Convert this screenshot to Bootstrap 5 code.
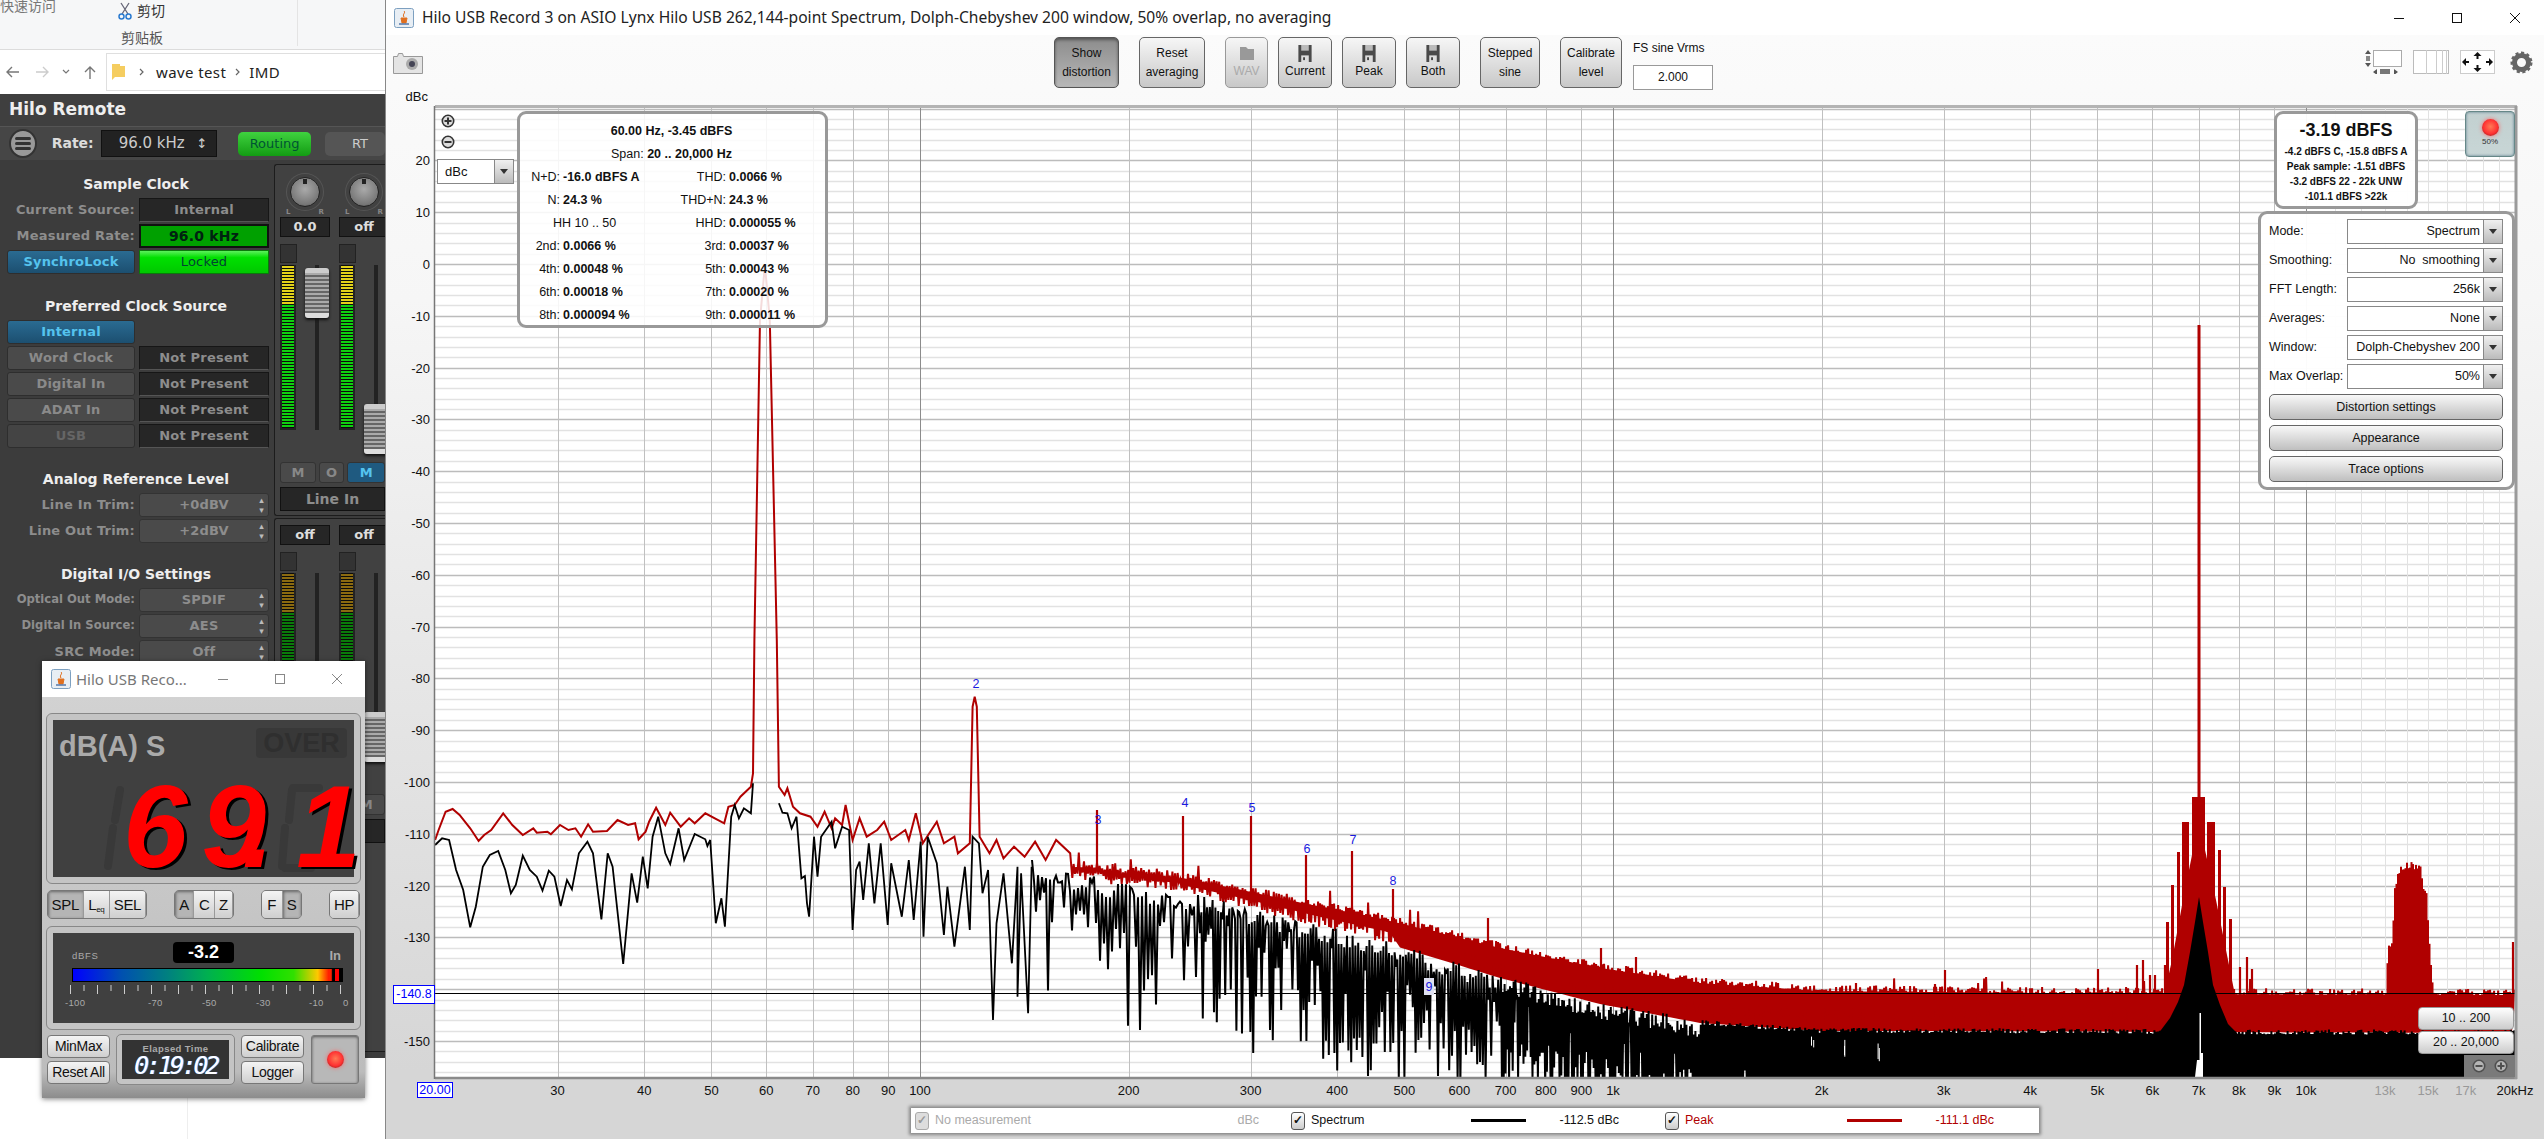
<!DOCTYPE html>
<html lang="en">
<head>
<meta charset="UTF-8">
<title>Hilo USB Record 3</title>
<link href="https://cdn.jsdelivr.net/npm/bootstrap@5.3.0/dist/css/bootstrap.min.css" rel="stylesheet">
<style>
html, body { margin: 0; background: #fff; }
.desk { position: relative; width: 2544px; height: 1139px; overflow: hidden; font-family: "Liberation Sans", Arial, sans-serif; font-size: 12px; color: #111; }

/* explorer behind everything */
.xp { position: absolute; left: 0; top: 0; width: 385px; height: 1139px; background: #fff; font-family: "Noto Sans", "Noto Sans CJK SC", sans-serif; }
.xp-ribbon { height: 50px; background: #f6f7f8; border-bottom: 1px solid #dcdcdc; position: relative; color: #555; font-family: "Noto Sans CJK SC", sans-serif; font-size: 14px; }
.xp-quick { position: absolute; left: 0; top: -5px; color: #777; }
.xp-cut { position: absolute; left: 118px; top: 0; color: #333; gap: 5px; }
.xp-board { position: absolute; left: 121px; top: 27px; color: #555; }
.xp-sep { position: absolute; left: 297px; top: 0; height: 46px; border-left: 1px solid #e4e4e4; }
.xp-addr { height: 44px; padding-left: 6px; color: #222; font-size: 15px; letter-spacing: .4px; }
.xp-path { margin-left: 6px; height: 38px; flex: 1; border: 1px solid #dfdfdf; border-right: 0; padding-left: 5px; }
.xp-ch1 { margin: 0 11px 0 14px; }
.xp-ch2 { margin: 0 8px 0 9px; }
.xp-rule { position: absolute; left: 187px; top: 1060px; height: 79px; border-left: 1px solid #eee; }

/* hilo remote */
.rm { position: absolute; left: 0; top: 94px; width: 385px; height: 964px; background: #3c3c3c; font-family: "DejaVu Sans", sans-serif; font-weight: 700; overflow: hidden; }
.rm-title { height: 32px; padding-left: 9px; color: #eee; font-size: 17px; background: #3f3f3f; }
.rm-bar { height: 34px; background: #464646; border-top: 1px solid #555; padding-left: 9px; }
.rm-menu { width: 29px; height: 29px; border-radius: 50%; background: #999; border: 2px solid #333; padding: 6px 4px; gap: 2px; }
.rm-menu i { display: block; height: 3px; background: #333; border-radius: 2px; }
.rm-rate { color: #ddd; font-size: 14px; margin-left: 15px; }
.rm-drop { width: 124px; height: 27px; margin-left: 7px; background: #222; border: 1px solid #111; color: #ccc; font-weight: 400; font-size: 15px; padding: 0 9px 0 17px; }
.rm-routing { width: 79px; height: 24px; margin-left: 21px; border-radius: 5px; background: linear-gradient(#3fd23f, #139c13); font-weight: 400; font-size: 13px; color: #053; }
.rm-rt { width: 60px; height: 24px; margin-left: 14px; border-radius: 5px; background: #555; color: #ccc; font-weight: 400; font-size: 13px; padding-left: 27px; flex: none; }
.rm-main { height: 898px; }
.rm-left { width: 274px; padding-top: 11px; flex: none; }
.rm-head { height: 26px; color: #eee; font-size: 14px; text-align: center; line-height: 26px; padding-right: 2px; }
.rm-row { height: 26px; padding-left: 7px; gap: 4px; align-items: center; font-size: 13px; letter-spacing: .2px; }
.rm-lbl { width: 128px; text-align: right; color: #8d8d8d; white-space: nowrap; }
.rm-lbl.tight { font-size: 11.6px; letter-spacing: 0; }
.rm-btn { width: 128px; height: 24px; border-radius: 3px; background: #4a4a4a; border: 1px solid #2e2e2e; color: #8a8a8a; text-align: center; line-height: 22px; }
.rm-btn.on { background: linear-gradient(#2a6b92, #1c4f70); color: #55c3ee; }
.rm-btn.dim { color: #666; background: #444; }
.rm-val { width: 130px; height: 24px; background: #262626; border: 1px solid #161616; border-bottom-color: #555; color: #8d8d8d; text-align: center; line-height: 22px; }
.rm-val.grn { background: #00a000; border: 2px solid #111; color: #021; line-height: 20px; font-size: 14px; }
.rm-val.lock { background: linear-gradient(#5cf05c, #00e000 30%, #00c800); border: 1px solid #0a7a0a; color: #043; font-weight: 400; }
.rm-sel { width: 130px; height: 24px; border-radius: 3px; background: #4a4a4a; border: 1px solid #333; color: #8d8d8d; position: relative; text-align: center; line-height: 22px; }
.rm-sel::after { content: "\25B4\A\25BE"; white-space: pre; position: absolute; right: 4px; top: 1px; font-size: 9px; line-height: 10px; color: #bbb; }
.rm-gap18 { margin-top: 18px; }
.rm-gap17 { margin-top: 17px; }
.mx { width: 111px; flex: none; background: #3c3c3c; }
.mx-strip { height: 352px; border: 1px solid #1c1c1c; border-right: 0; border-radius: 3px 0 0 3px; margin-top: 4px; padding: 6px 0 0 5px; background: #414141; overflow: hidden; }
.mx-strip2 { height: 534px; margin-top: 2px; }
.mx-cols { gap: 9px; }
.mx-col { width: 50px; flex: none; position: relative; }
.mx-knob { width: 30px; height: 30px; border-radius: 50%; margin: 6px auto 0; background: radial-gradient(circle at 50% 40%, #aaa, #777 70%, #222 100%); border: 1px solid #222; position: relative; box-shadow: 0 0 0 3px #414141, 0 0 0 4px #555; }
.mx-knob::after { content: ""; position: absolute; left: 12px; top: 1px; width: 4px; height: 5px; background: #222; }
.mx-lr { font-size: 7px; color: #888; height: 10px; padding: 0 6px; }
.mx-num { height: 20px; width: 50px; background: #262626; border: 1px solid #111; color: #ddd; font-size: 13px; text-align: center; line-height: 18px; margin: 0 0 7px; }
.mx-chan { height: 185px; position: relative; }
.mx-clip { width: 17px; height: 19px; background: #333; border: 1px solid #222; margin-bottom: 2px; }
.mx-vu { width: 16px; height: 165px; background: repeating-linear-gradient(#0b0b0b 0 1px, #0fcf0f 1px 3px); border: 2px solid #222; border-top: 0; position: relative; }
.mx-vu::before { content: ""; position: absolute; left: 0; right: 0; top: 0; height: 40px; background: repeating-linear-gradient(#0b0b0b 0 1px, #e2d21a 1px 3px); }
.mx-vu.off { background: repeating-linear-gradient(#0b0b0b 0 1px, #0a7a0a 1px 3px); }
.mx-vu.off::before { background: repeating-linear-gradient(#0b0b0b 0 1px, #8a6a10 1px 3px); }
.mx-track { position: absolute; left: 35px; top: 21px; width: 4px; height: 165px; background: #222; }
.mx-thumb { position: absolute; left: 25px; width: 24px; height: 50px; border-radius: 3px; background: repeating-linear-gradient(#aaa 0 2px, #666 2px 4px); box-shadow: 0 2px 3px #111; border-top: 5px solid #ccc; border-bottom: 5px solid #ddd; }
.mx-thumb.low { top: 160px; }
.mx-thumb.high { top: 24px; }
.mx-btns { gap: 3px; margin-top: 33px; color: #888; font-size: 13px; text-align: center; line-height: 19px; }
.mx-btns div { height: 21px; border-radius: 3px; background: #4a4a4a; border: 1px solid #333; }
.mx-m1 { width: 38px; }
.mx-m2 { width: 27px; }
.mx-m3 { width: 40px; }
.mx-m3.on { background: #1f5a80; color: #55c3ee; }
.mx-strip2 .mx-btns { margin-top: 57px; }
.mx-name { height: 24px; margin-top: 4px; background: #262626; border: 1px solid #111; color: #8d8d8d; font-size: 14px; text-align: center; line-height: 22px; }

/* main window */
.mw { position: absolute; left: 385px; top: 0; width: 2159px; height: 1139px; background: linear-gradient(#fbfbfb 35px, #f6f6f6 300px, #d6d6d6 1070px); border-left: 1px solid #888; }
.mw-title { height: 35px; background: #fff; padding-left: 8px; font-family: "Noto Sans", sans-serif; font-size: 15.6px; color: #222; position: relative; }
.mw-ctrl { position: absolute; top: 0; right: 0; gap: 0; }
.mw-ctrl span { width: 58px; height: 35px; display: flex; align-items: center; justify-content: center; }
.tbar { height: 55px; padding: 2px 11px 0 7px; }
.btn.tb { width: 65px; height: 51px; margin-left: 10px; padding: 0; border: 1px solid #666; border-radius: 5px; background: linear-gradient(#f6f6f6, #c8c8c8); color: #111; font-size: 12px; line-height: 19px; display: flex; flex-direction: column; align-items: center; justify-content: center; --bs-btn-font-size: 12px; }
.btn.tb.down { background: linear-gradient(#8c8c8c, #b8b8b8); box-shadow: inset 0 2px 3px #555; border-color: #555; }
.btn.tb.dis { color: #aaa; border-color: #999; }
.tb-first { margin-left: 631px !important; }
.tb-20 { margin-left: 20px !important; }
.w66 { width: 66px !important; }
.w43 { width: 43px !important; }
.w54 { width: 54px !important; }
.w60 { width: 60px !important; }
.w62 { width: 62px !important; }
.fs-box { margin-left: 11px; width: 80px; height: 51px; font-size: 12px; padding-top: 2px; }
.fs-inp { height: 25px; border: 1px solid #999; background: #fff; text-align: center; line-height: 23px; margin-top: 8px; }
.tb-icons { margin-left: auto; gap: 11px; padding-top: 13px; }
.chart { position: relative; height: 1016px; }
.chart svg.plot { display: block; }
.plot text { font-family: "Liberation Sans", Arial, sans-serif; font-size: 13px; fill: #111; }

/* overlays sit on top of the plot; coordinates are plot-relative */
.ov { position: absolute; background: rgba(255,255,255,.86); border: 3px solid #999; border-radius: 9px; }
.ov-info { left: 131px; top: 21px; width: 311px; height: 217px; padding-top: 6px; font-size: 12.5px; }
.ov-row { height: 23px; line-height: 23px; white-space: nowrap; }
.ov-k1 { width: 32px; text-align: right; flex: none; margin-right: 3px; }
.ov-hh { width: 148px; flex: none; padding-left: 25px; }
.ov-v1 { width: 113px; flex: none; font-weight: 700; }
.ov-k2 { width: 50px; text-align: right; flex: none; margin-right: 3px; }
.ov-v2 { font-weight: 700; }
.ov-c { text-align: center; padding-right: 2px; }
.ov-level { left: 1888px; top: 21px; width: 144px; height: 98px; text-align: center; font-weight: 700; font-size: 10px; line-height: 15px; padding-top: 3px; background: rgba(255,255,255,.95); }
.ov-big { font-size: 18px; line-height: 27px; }
.ov-rec { position: absolute; left: 2079px; top: 21px; width: 50px; height: 46px; border-radius: 4px; border: 1px solid #688; background: linear-gradient(#c2d0d0, #c8d6d6); font-size: 8px; color: #333; box-shadow: inset 0 0 3px #578; padding-top: 7px; text-align: center; }
.led { width: 17px; height: 17px; border-radius: 50%; background: radial-gradient(circle at 50% 45%, #ff7a55, #f33 55%, #b22 80%); box-shadow: 0 0 4px #f66; margin: 0 auto; }
.ov-ctl { left: 1872px; top: 121px; width: 257px; height: 279px; background: rgba(255,255,255,.97); padding: 5px 8px 0 8px; }
.ctl-row { height: 25px; margin-bottom: 4px; }
.ctl-lbl { width: 78px; flex: none; white-space: nowrap; font-size: 12.5px; }
.ctl-sel { width: 156px; flex: none; height: 25px; border: 1px solid #888; background: #fff; text-align: right; line-height: 23px; padding-right: 22px; position: relative; font-size: 12.5px; white-space: nowrap; }
.ctl-sel i, .dbc-sel i { position: absolute; right: 0; top: 0; bottom: 0; width: 19px; background: linear-gradient(#f0f0f0, #bbb); border-left: 1px solid #888; }
.ctl-sel i::after, .dbc-sel i::after { content: ""; position: absolute; left: 5px; top: 9px; border: 4px solid transparent; border-top: 5px solid #333; }
.btn.ctl-btn { display: block; width: 234px; height: 26px; margin: 5px 0 0 0; padding: 0; border: 1px solid #666; border-radius: 5px; background: linear-gradient(#f8f8f8, #bfbfbf); color: #111; font-size: 12.5px; --bs-btn-font-size: 12.5px; }
.dbc-sel { position: absolute; left: 51px; top: 69px; width: 77px; height: 25px; background: #fff; border: 1px solid #888; font-size: 13px; line-height: 23px; padding-left: 7px; }
.zoom-dots { position: absolute; left: 55px; top: 24px; gap: 7px; }
.btn.range { position: absolute; left: 2032px; width: 96px; height: 23px; padding: 0; border: 1px solid #999; border-radius: 4px; background: linear-gradient(#fff, #ccc); color: #111; font-size: 12.5px; --bs-btn-font-size: 12.5px; }
.rg1 { top: 917px; }
.rg2 { top: 941px; }
.rg-zoom { position: absolute; left: 2078px; top: 965px; width: 51px; height: 22px; background: #7a7a7a; gap: 8px; }
.tag { position: absolute; background: #fff; border: 1px solid #00f; color: #00f; font-size: 12.5px; text-align: center; }
.tag-y { left: 7px; top: 895px; width: 42px; height: 19px; line-height: 17px; }
.tag-x { left: 31px; top: 992px; width: 36px; height: 16px; line-height: 14px; }

.lg { margin: 2px 0 0 525px; width: 1128px; height: 25px; background: #fff; box-shadow: 0 0 3px 2px #888; font-size: 12.5px; }
.lg-chk { width: 14px; height: 18px; margin: 0 6px 0 4px; border: 1px solid #555; border-radius: 3px; background: linear-gradient(#fff, #ccc); color: #111; font-size: 12px; font-weight: 700; line-height: 15px; text-align: center; flex: none; }
.lg-chk.dis { border-color: #aaa; color: #999; background: #ddd; }
.lg-dash { width: 55px; height: 3px; flex: none; }
.lg-a { width: 376px; }
.lg-b { width: 374px; }
.lg-sp { margin-left: 106px; }
.lg-pk { margin-left: 133px; background: #b00000; }
.lg-v { margin-left: 34px; }
.c-grey { color: #aaa; }
.c-red { color: #b00000; }

/* hilo record level meter window */
.rc { position: absolute; left: 42px; top: 661px; width: 323px; height: 437px; box-shadow: 0 1px 5px rgba(0,0,0,.5); background: linear-gradient(#d4d4d4, #bcbcbc 94%, #8c8c8c); }
.rc-title { height: 36px; background: #fff; padding-left: 9px; font-family: "Noto Sans", sans-serif; font-size: 15px; color: #777; position: relative; gap: 5px; }
.rc-ctl { position: absolute; right: 0; top: 0; }
.rc-ctl span { width: 57px; height: 36px; display: flex; align-items: center; justify-content: center; }
.rc-body { padding: 17px 5px 0 5px; }
.rc-frame { border: 6px solid #c4c4c4; outline: 1px solid #888; border-radius: 5px; background: #404040; position: relative; }
.rc-lcd { height: 169px; }
.rc-mode { position: absolute; left: 6px; top: 8px; font-weight: 700; font-size: 29px; color: #aaa; line-height: 36px; }
.rc-over { position: absolute; left: 203px; top: 8px; width: 91px; height: 30px; background: #383838; border-radius: 4px; color: #2f2f2f; font-weight: 700; font-size: 27px; line-height: 30px; text-align: center; }
.rc-num { position: absolute; left: 70px; top: 49px; color: #f00; font-style: italic; font-weight: 700; font-size: 116px; line-height: 116px; text-shadow: 3px 2px 0 #000; white-space: nowrap; letter-spacing: 14px; }
.rc-dot { margin-left: -38px; letter-spacing: 22px; }
.rc-ghost { position: absolute; left: 0; top: 0; }
.rc-keys { margin-top: 7px; height: 29px; }
.rc-grp { display: flex; border: 1px solid #777; border-radius: 5px; overflow: hidden; height: 29px; background: #999; }
.rc-key { height: 100%; border-right: 1px solid #999; background: linear-gradient(#f4f4f4, #cfcfcf); color: #111; font-size: 15px; line-height: 27px; text-align: center; letter-spacing: -.3px; }
.rc-key.down { background: #b5b5b5; box-shadow: inset 1px 1px 3px #666; }
.rc-key sub { font-size: 8px; bottom: -.2em; }
.k36 { width: 36px; }
.k27 { width: 27px; }
.k21 { width: 21px; }
.k20 { width: 20px; }
.k19 { width: 19px; }
.k18 { width: 18px; }
.k29 { width: 29px; }
.rc-gap { margin-left: 27px; }
.rc-meter { height: 102px; margin-top: 8px; }
.rc-dbfs { position: absolute; left: 19px; top: 16px; color: #aaa; font-size: 9.5px; letter-spacing: .7px; }
.rc-peak { position: absolute; left: 120px; top: 9px; width: 61px; height: 21px; background: #000; border-radius: 4px; color: #fff; font-weight: 700; font-size: 18px; line-height: 21px; text-align: center; }
.rc-in { position: absolute; right: 13px; top: 13px; color: #aaa; font-weight: 700; font-size: 13px; }
.rc-bar { position: absolute; left: 19px; top: 35px; width: 271px; height: 14px; border: 1px solid #000; background: linear-gradient(90deg, #00f 0, #0050b0 18%, #008080 35%, #00b050 50%, #00e000 70%, #30e000 82%, #ffc800 91%, #ff2000 95%, #ff2000 96%, #000 96.5%, #000 97.5%, #f00 97.5%, #f00 99%, #000 99%); }
.rc-scale { position: absolute; left: 12px; top: 52px; }
.rc-scale text { font-family: "Liberation Sans", sans-serif; font-size: 9.5px; fill: #aaa; letter-spacing: .3px; }
.rc-foot { margin-top: 6px; height: 49px; }
.rc-small { width: 63px; flex: none; gap: 3px; }
.rc-small2 { width: 63px; flex: none; gap: 3px; margin-left: 7px; }
.rc-sbtn { height: 23px; border: 1px solid #777; border-radius: 4px; background: linear-gradient(#f4f4f4, #cfcfcf); font-size: 14px; line-height: 21px; text-align: center; color: #111; letter-spacing: -.3px; }
.rc-time { width: 117px; flex: none; margin-left: 7px; border: 5px solid #c4c4c4; outline: 1px solid #888; border-radius: 4px; background: #333; color: #aaa; text-align: center; font-size: 9.5px; line-height: 11px; padding-top: 3px; font-weight: 700; letter-spacing: .4px; }
.rc-clock { font-family: "DejaVu Sans Mono", monospace; font-style: italic; font-size: 25px; line-height: 24px; color: #fff; letter-spacing: -3.2px; font-weight: 400; text-shadow: 1px 0 0 #49f; }
.rc-rec { width: 48px; flex: none; margin-left: 7px; border: 1px solid #777; border-radius: 3px; background: #b8b8b8; box-shadow: inset 0 1px 3px #555; }
</style>
</head>
<body>
<svg width="0" height="0" class="position-absolute">
  <symbol id="java" viewBox="0 0 20 20">
    <rect x=".5" y=".5" width="19" height="19" rx="2" fill="#e8eef4" stroke="#7da0c0"/>
    <path d="M10 3c2 2-2 3 0 6M7 10h6l-1 5H8z" fill="#e07020" stroke="#e07020"/>
    <path d="M5 16h10" stroke="#5577aa" stroke-width="1.5"/>
  </symbol>
  <symbol id="floppy" viewBox="0 0 14 18">
    <path d="M0 0h14v18H0z" fill="#4a4a4a"/>
    <rect x="3" y="0" width="8" height="6" fill="#bbb"/>
    <rect x="3" y="11" width="8" height="7" fill="#ddd"/>
    <rect x="5" y="13" width="2" height="3" fill="#444"/>
  </symbol>
  <symbol id="plus" viewBox="0 0 14 14">
    <circle cx="7" cy="7" r="5.7" fill="#ddd" stroke="#333" stroke-width="1.6"/>
    <path d="M3.5 7h7M7 3.5v7" stroke="#333" stroke-width="2"/>
  </symbol>
  <symbol id="minus" viewBox="0 0 14 14">
    <circle cx="7" cy="7" r="5.7" fill="#ddd" stroke="#333" stroke-width="1.6"/>
    <path d="M3.5 7h7" stroke="#333" stroke-width="2"/>
  </symbol>
</svg>

<div class="desk">

  <div class="xp">
    <div class="xp-ribbon">
      <span class="xp-quick">快速访问</span>
      <div class="xp-cut d-flex align-items-center">
        <svg width="14" height="18" viewBox="0 0 14 18"><path d="M3 1l7 11M11 1L4 12" stroke="#667" stroke-width="1.3" fill="none"/><circle cx="3.5" cy="14.5" r="2.5" fill="none" stroke="#2a7ad0" stroke-width="1.5"/><circle cx="10.5" cy="14.5" r="2.5" fill="none" stroke="#2a7ad0" stroke-width="1.5"/></svg>
        <span>剪切</span>
      </div>
      <span class="xp-board">剪贴板</span>
      <span class="xp-sep"></span>
    </div>
    <div class="xp-addr d-flex align-items-center">
      <svg width="94" height="18" viewBox="0 0 94 18"><path d="M13 9H1m5-5L1 9l5 5" stroke="#777" stroke-width="1.4" fill="none"/><path d="M30 9h12m-5-5l5 5-5 5" stroke="#ccc" stroke-width="1.4" fill="none"/><path d="M57 7l3 3 3-3" stroke="#777" stroke-width="1.2" fill="none"/><path d="M84 16V4m-5 5l5-5 5 5" stroke="#777" stroke-width="1.4" fill="none"/></svg>
      <div class="xp-path d-flex align-items-center">
        <svg width="13" height="16" viewBox="0 0 13 16"><path d="M0 0h8v2h5v11H3l-3 3z" fill="#f5cd60"/></svg>
        <svg class="xp-ch1" width="6" height="8" viewBox="0 0 6 8"><path d="M1 1l3 3-3 3" stroke="#666" stroke-width="1.2" fill="none"/></svg>
        <span>wave test</span>
        <svg class="xp-ch2" width="6" height="8" viewBox="0 0 6 8"><path d="M1 1l3 3-3 3" stroke="#666" stroke-width="1.2" fill="none"/></svg>
        <span>IMD</span>
      </div>
    </div>
    <span class="xp-rule"></span>
  </div>

  <div class="rm">
    <div class="rm-title d-flex align-items-center">Hilo Remote</div>
    <div class="rm-bar d-flex align-items-center">
      <div class="rm-menu d-flex flex-column"><i></i><i></i><i></i></div>
      <span class="rm-rate">Rate:</span>
      <div class="rm-drop d-flex align-items-center justify-content-between"><span>96.0 kHz</span><span class="small">&#8597;</span></div>
      <div class="rm-routing d-flex align-items-center justify-content-center">Routing</div>
      <div class="rm-rt d-flex align-items-center">RT</div>
    </div>
    <div class="rm-main d-flex">
      <div class="rm-left">
        <div class="rm-head">Sample Clock</div>
        <div class="rm-row d-flex"><div class="rm-lbl">Current Source:</div><div class="rm-val">Internal</div></div>
        <div class="rm-row d-flex"><div class="rm-lbl">Measured Rate:</div><div class="rm-val grn">96.0 kHz</div></div>
        <div class="rm-row d-flex"><div class="rm-btn on">SynchroLock</div><div class="rm-val lock">Locked</div></div>

        <div class="rm-head rm-gap18">Preferred Clock Source</div>
        <div class="rm-row d-flex"><div class="rm-btn on">Internal</div></div>
        <div class="rm-row d-flex"><div class="rm-btn">Word Clock</div><div class="rm-val">Not Present</div></div>
        <div class="rm-row d-flex"><div class="rm-btn">Digital In</div><div class="rm-val">Not Present</div></div>
        <div class="rm-row d-flex"><div class="rm-btn">ADAT In</div><div class="rm-val">Not Present</div></div>
        <div class="rm-row d-flex"><div class="rm-btn dim">USB</div><div class="rm-val">Not Present</div></div>

        <div class="rm-head rm-gap17">Analog Reference Level</div>
        <div class="rm-row d-flex"><div class="rm-lbl">Line In Trim:</div><div class="rm-sel">+0dBV</div></div>
        <div class="rm-row d-flex"><div class="rm-lbl">Line Out Trim:</div><div class="rm-sel">+2dBV</div></div>

        <div class="rm-head rm-gap17">Digital I/O Settings</div>
        <div class="rm-row d-flex"><div class="rm-lbl tight">Optical Out Mode:</div><div class="rm-sel">SPDIF</div></div>
        <div class="rm-row d-flex"><div class="rm-lbl tight">Digital In Source:</div><div class="rm-sel">AES</div></div>
        <div class="rm-row d-flex"><div class="rm-lbl">SRC Mode:</div><div class="rm-sel">Off</div></div>
      </div>
      <div class="mx">
        <div class="mx-strip">
          <div class="mx-cols d-flex">
            <div class="mx-col">
              <div class="mx-knob"></div>
              <div class="mx-lr d-flex justify-content-between"><span>L</span><span>R</span></div>
              <div class="mx-num">0.0</div>
              <div class="mx-chan"><div class="mx-clip"></div><div class="mx-vu"></div><div class="mx-track"></div><div class="mx-thumb high"></div></div>
            </div>
            <div class="mx-col">
              <div class="mx-knob"></div>
              <div class="mx-lr d-flex justify-content-between"><span>L</span><span>R</span></div>
              <div class="mx-num">off</div>
              <div class="mx-chan"><div class="mx-clip"></div><div class="mx-vu"></div><div class="mx-track"></div><div class="mx-thumb low"></div></div>
            </div>
          </div>
          <div class="mx-btns d-flex"><div class="mx-m1">M</div><div class="mx-m2">O</div><div class="mx-m3 on">M</div></div>
          <div class="mx-name">Line In</div>
        </div>
        <div class="mx-strip mx-strip2">
          <div class="mx-cols d-flex">
            <div class="mx-col">
              <div class="mx-num">off</div>
              <div class="mx-chan"><div class="mx-clip"></div><div class="mx-vu off"></div><div class="mx-track"></div></div>
            </div>
            <div class="mx-col">
              <div class="mx-num">off</div>
              <div class="mx-chan"><div class="mx-clip"></div><div class="mx-vu off"></div><div class="mx-track"></div><div class="mx-thumb low"></div></div>
            </div>
          </div>
          <div class="mx-btns d-flex"><div class="mx-m1">M</div><div class="mx-m2">O</div><div class="mx-m3">M</div></div>
          <div class="mx-name"></div>
        </div>
      </div>
    </div>
  </div>

  <div class="mw d-flex flex-column">
    <div class="mw-title d-flex align-items-center">
      <svg class="me-2" width="20" height="20"><use href="#java"/></svg>
      <span>Hilo USB Record 3 on ASIO Lynx Hilo USB 262,144-point Spectrum, Dolph-Chebyshev 200 window, 50% overlap, no averaging</span>
      <div class="mw-ctrl d-flex">
        <span><svg width="12" height="12"><path d="M1 6.5h10" stroke="#111"/></svg></span>
        <span><svg width="12" height="12"><rect x="1.5" y="1.5" width="9" height="9" fill="none" stroke="#111"/></svg></span>
        <span><svg width="12" height="12"><path d="M1 1l10 10M11 1L1 11" stroke="#111"/></svg></span>
      </div>
    </div>

    <div class="tbar d-flex align-items-start">
      <svg class="mt-3" width="30" height="21" viewBox="0 0 30 21"><path d="M.5 3.5h4l1-3h4l1 3h19v17H.5z" fill="#e4e4e4" stroke="#999"/><circle cx="19" cy="11" r="6" fill="#aaa"/><circle cx="19" cy="11" r="3" fill="#445"/></svg>
      <button class="btn tb down tb-first"><span>Show</span><span>distortion</span></button>
      <button class="btn tb tb-20 w66"><span>Reset</span><span>averaging</span></button>
      <button class="btn tb dis tb-20 w43"><svg width="14" height="17" viewBox="0 0 14 17"><path d="M0 2h6l2 2h6v11H0z" fill="#999"/></svg><span>WAV</span></button>
      <button class="btn tb w54"><svg width="14" height="17"><use href="#floppy"/></svg><span>Current</span></button>
      <button class="btn tb w54"><svg width="14" height="17"><use href="#floppy"/></svg><span>Peak</span></button>
      <button class="btn tb w54"><svg width="14" height="17"><use href="#floppy"/></svg><span>Both</span></button>
      <button class="btn tb tb-20 w60"><span>Stepped</span><span>sine</span></button>
      <button class="btn tb tb-20 w62"><span>Calibrate</span><span>level</span></button>
      <div class="fs-box">
        <div>FS sine Vrms</div>
        <div class="fs-inp">2.000</div>
      </div>
      <div class="tb-icons d-flex align-items-center">
        <svg width="37" height="24" viewBox="0 0 37 24"><rect x="8.500" y=".5" width="28" height="16" fill="#fff" stroke="#aaa"/><path d="M3 0l3 4H0zM3 17l3-4H0zM8 22l4-3v6zM33 22l-4-3v6z" fill="#555"/><rect x="1" y="6" width="4" height="5" fill="#888"/><rect x="15" y="19" width="10" height="5" fill="#777"/></svg>
        <svg width="36" height="24" viewBox="0 0 36 24"><rect x=".5" y=".5" width="35" height="23" fill="#fff" stroke="#bbb"/><path d="M13.500 0v24M23.500 0v24M29.500 0v24M33.500 0v24" stroke="#ccc"/></svg>
        <svg width="35" height="24" viewBox="0 0 35 24"><rect x=".5" y=".5" width="34" height="23" fill="#fff" stroke="#ccc"/><path d="M17.500 2l4 4h-3v3h-2V6h-3zM17.500 22l4-4h-3v-3h-2v3h-3zM2 12l4-4v3h3v2H6v3zM33 12l-4-4v3h-3v2h3v3z" fill="#111"/></svg>
        <svg class="ms-1" width="23" height="23" viewBox="0 0 23 23"><circle cx="11.500" cy="11.500" r="7" fill="none" stroke="#666" stroke-width="5"/><circle cx="11.500" cy="11.500" r="9.500" fill="none" stroke="#666" stroke-width="3" stroke-dasharray="3 2.500"/></svg>
      </div>
    </div>

    <div class="chart">
      <svg class="plot" id="plot" width="2158" height="1016" viewBox="386 90 2158 1016"></svg>

      <div class="zoom-dots d-flex flex-column">
        <svg width="14" height="14"><use href="#plus"/></svg>
        <svg width="14" height="14"><use href="#minus"/></svg>
      </div>
      <div class="dbc-sel">dBc<i></i></div>

      <div class="ov ov-info">
        <div class="ov-row ov-c fw-bold">60.00 Hz, -3.45 dBFS</div>
        <div class="ov-row ov-c">Span: <b>20 .. 20,000 Hz</b></div>
        <div id="infoRows"></div>
      </div>

      <div class="ov ov-level">
        <div class="ov-big">-3.19 dBFS</div>
        <div>-4.2 dBFS C, -15.8 dBFS A</div>
        <div>Peak sample: -1.51 dBFS</div>
        <div>-3.2 dBFS 22 - 22k UNW</div>
        <div>-101.1 dBFS &gt;22k</div>
      </div>
      <div class="ov-rec"><div class="led"></div>50%</div>

      <div class="ov ov-ctl">
        <div id="ctlRows"></div>
        <button class="btn ctl-btn">Distortion settings</button>
        <button class="btn ctl-btn">Appearance</button>
        <button class="btn ctl-btn">Trace options</button>
      </div>

      <button class="btn range rg1">10 .. 200</button>
      <button class="btn range rg2">20 .. 20,000</button>
      <div class="rg-zoom d-flex align-items-center justify-content-center">
        <svg width="14" height="14" opacity=".6"><use href="#minus"/></svg>
        <svg width="14" height="14" opacity=".6"><use href="#plus"/></svg>
      </div>
      <div class="tag tag-y">-140.8</div>
      <div class="tag tag-x">20.00</div>
    </div>

    <div class="lg d-flex align-items-center">
      <div class="lg-a d-flex align-items-center c-grey"><span class="lg-chk dis">&#10003;</span>No measurement<span class="ms-auto pe-4 me-1">dBc</span></div>
      <div class="lg-b d-flex align-items-center"><span class="lg-chk">&#10003;</span>Spectrum<span class="lg-dash lg-sp bg-black"></span><span class="lg-v">-112.5 dBc</span></div>
      <div class="d-flex align-items-center c-red"><span class="lg-chk">&#10003;</span>Peak<span class="lg-dash lg-pk"></span><span class="lg-v">-111.1 dBc</span></div>
    </div>
  </div>

  <div class="rc">
    <div class="rc-title d-flex align-items-center">
      <svg width="20" height="20"><use href="#java"/></svg>
      <span>Hilo USB Reco...</span>
      <div class="rc-ctl d-flex">
        <span><svg width="12" height="12"><path d="M1 6.500h10" stroke="#888"/></svg></span>
        <span><svg width="12" height="12"><rect x="1.500" y="1.500" width="9" height="9" fill="none" stroke="#888"/></svg></span>
        <span><svg width="12" height="12"><path d="M1 1l10 10M11 1L1 11" stroke="#888"/></svg></span>
      </div>
    </div>
    <div class="rc-body">
      <div class="rc-frame rc-lcd">
        <svg class="rc-ghost" width="301" height="157"><g stroke="#393939" stroke-width="8" stroke-linecap="round"><path d="M62 100l5-30M55 146l5-38M236 100l3-30M229 146l3-38M232 148h26M240 68h26"/></g></svg>
        <div class="rc-mode">dB(A) S</div>
        <div class="rc-over">OVER</div>
        <div class="rc-num"><span>6</span><span>9</span><span class="rc-dot">.</span><span>1</span></div>
      </div>
      <div class="rc-keys d-flex">
        <div class="rc-grp"><div class="rc-key down k36">SPL</div><div class="rc-key k27">L<sub>eq</sub></div><div class="rc-key k36">SEL</div></div>
        <div class="rc-grp rc-gap"><div class="rc-key down k20">A</div><div class="rc-key k21">C</div><div class="rc-key k18">Z</div></div>
        <div class="rc-grp rc-gap"><div class="rc-key k21">F</div><div class="rc-key down k19">S</div></div>
        <div class="rc-grp rc-gap"><div class="rc-key k29">HP</div></div>
      </div>
      <div class="rc-frame rc-meter">
        <div class="rc-dbfs">dBFS</div>
        <div class="rc-peak">-3.2</div>
        <div class="rc-in">In</div>
        <div class="rc-bar"></div>
        <svg class="rc-scale" width="285" height="32" id="rcScale"></svg>
      </div>
      <div class="rc-foot d-flex">
        <div class="rc-small d-flex flex-column"><div class="rc-sbtn">MinMax</div><div class="rc-sbtn">Reset All</div></div>
        <div class="rc-time">Elapsed Time<div class="rc-clock">0:19:02</div></div>
        <div class="rc-small2 d-flex flex-column"><div class="rc-sbtn">Calibrate</div><div class="rc-sbtn">Logger</div></div>
        <div class="rc-rec d-flex align-items-center justify-content-center"><div class="led"></div></div>
      </div>
    </div>
  </div>
</div>

<script>
// info card
const info = [
  ["N+D:", "-16.0 dBFS A", "THD:", "0.0066 %"],
  ["N:", "24.3 %", "THD+N:", "24.3 %"],
  [null, "HH 10 .. 50", "HHD:", "0.000055 %"],
  ["2nd:", "0.0066 %", "3rd:", "0.00037 %"],
  ["4th:", "0.00048 %", "5th:", "0.00043 %"],
  ["6th:", "0.00018 %", "7th:", "0.00020 %"],
  ["8th:", "0.000094 %", "9th:", "0.000011 %"]
];
document.getElementById("infoRows").innerHTML = info.map(r => {
  let left = r[0] === null
    ? `<span class="ov-hh">${r[1]}</span>`
    : `<span class="ov-k1">${r[0]}</span><span class="ov-v1">${r[1]}</span>`;
  return `<div class="ov-row d-flex ps-2">${left}<span class="ov-k2">${r[2]}</span><span class="ov-v2">${r[3]}</span></div>`;
}).join("");

// right hand controls
const ctl = [["Mode:", "Spectrum"], ["Smoothing:", "No&nbsp; smoothing"], ["FFT Length:", "256k"], ["Averages:", "None"], ["Window:", "Dolph-Chebyshev 200"], ["Max Overlap:", "50%"]];
document.getElementById("ctlRows").innerHTML = ctl.map(c =>
  `<div class="ctl-row d-flex align-items-center"><span class="ctl-lbl">${c[0]}</span><div class="ctl-sel">${c[1]}<i></i></div></div>`
).join("");

// level meter scale
let sc = "";
for (let i = 0; i <= 20; i++) {
  let x = 5.5 + i * 13.5;
  sc += `<path d="M${x} 0v${i % 2 ? 6 : 9}" stroke="#ccc"/>`;
}
[["-100", 0], ["-70", 83], ["-50", 137], ["-30", 191], ["-10", 244], ["0", 278]].forEach(l => {
  sc += `<text x="${l[1]}" y="21">${l[0]}</text>`;
});
document.getElementById("rcScale").innerHTML = sc;

// spectrum plot, drawn in page coordinates
const L = 435, R = 2515, T = 108, B = 1077;
const X = f => 920 + 693 * Math.log10(f / 100);
const Y = db => 264 - 5.18 * db;
let seed = 48271;
function rnd() { seed = (seed * 16807) % 2147483647; return seed / 2147483647; }
function interp(tab, x) {
  for (let i = 1; i < tab.length; i++) {
    if (x <= tab[i][0]) {
      let a = tab[i - 1], b = tab[i];
      return a[1] + (b[1] - a[1]) * (x - a[0]) / (b[0] - a[0]);
    }
  }
  return tab[tab.length - 1][1];
}

let s = `<rect x="${L}" y="${T}" width="${R - L}" height="${B - T}" fill="#fff"/>`;

// horizontal grid, every 2 dB
for (let db = 30; db >= -156; db -= 2) {
  let y = Math.round(Y(db)) + .5, major = db % 10 === 0;
  s += `<path d="M${L} ${y}H${R}" stroke="${major ? "#bcbcbc" : "#e2e2e2"}" stroke-width="1.5"/>`;
}
// vertical grid
for (let dec = 10; dec <= 1000; dec *= 10) {
  for (let m = 1; m < 10; m++) {
    let f = dec * m;
    if (f < 30) continue;
    let x = Math.round(X(f)) + .5;
    s += `<path d="M${x} ${T}V${B}" stroke="${m === 1 && f >= 100 ? "#8c8c8c" : "#c0c0c0"}"/>`;
  }
}
s += `<path d="M${Math.round(X(10000)) + .5} ${T}V${B}" stroke="#8c8c8c"/>`;
for (let k = 11; k < 20; k++) {
  let x = Math.round(X(k * 1000)) + .5;
  s += `<path d="M${x} ${T}V${B}" stroke="#e2e2e2"/>`;
}

// low frequency traces, read off the reference
const zx = p => (400 + p[0] / 1.425).toFixed(1) + " " + (640 + p[1] / 3).toFixed(1);
const redLow = [[50,600],[55,570],[65,515],[75,507],[85,525],[100,565],[112,603],[120,585],[130,570],[147,520],[160,555],[175,585],[190,565],[195,578],[210,575],[215,583],[228,555],[240,570],[250,565],[258,590],[268,553],[275,575],[295,573],[310,540],[325,555],[335,550],[340,598],[350,575],[355,545],[365,503],[378,555],[385,518],[400,560],[412,535],[420,550],[435,520],[462,550],[468,500],[477,495],[485,470],[500,440],[503,400],[505,0],[513,-960],[520,-1125],[527,-960],[537,0],[540,440],[548,465],[552,445],[560,500],[570,520],[585,530],[595,560],[605,515],[615,565],[620,535],[630,555],[635,495],[645,600],[655,535],[665,590],[680,570],[690,545],[700,600],[720,570],[725,600],[735,520],[745,610],[765,545],[775,610],[790,590],[795,640],[812,610],[816,200],[819,170],[822,200],[826,590],[840,640],[850,600],[860,655],[875,620],[890,650],[905,605],[920,660],[935,600],[955,640]];
const blackLow = [[50,615],[60,595],[70,600],[80,690],[90,750],[100,862],[108,800],[118,680],[128,645],[140,633],[150,690],[158,760],[165,735],[175,647],[185,690],[195,710],[203,752],[212,692],[220,710],[229,798],[238,720],[245,748],[255,640],[267,605],[275,640],[287,838],[296,640],[303,680],[318,972],[330,700],[338,788],[346,650],[353,745],[360,590],[368,530],[378,640],[385,672],[397,565],[405,660],[420,582],[435,598],[438,618],[442,600],[450,850],[458,775],[463,860],[472,530],[477,495],[483,535],[490,505],[500,520],[503,430]];
const blackLow2 = [[540,490],[545,518],[552,520],[558,565],[565,530],[572,715],[577,708],[580,790],[583,830],[590,590],[595,710],[600,590],[615,545],[620,625],[630,560],[640,570],[645,870],[650,690],[655,665],[660,780],[668,610],[676,790],[685,610],[695,855],[700,670],[715,830],[725,660],[732,840],[742,605],[746,890],[752,590],[765,670],[775,885],[780,740],[790,920],[805,680],[812,870],[816,590],[825,610],[830,760],[838,690],[845,1140],[850,850],[860,700],[872,970],[880,680],[880,1070],[885,700],[895,1120],[900,680]];

// noise floors above the hand read part
const redTop = [[1074,860],[1172,870],[1242,884],[1312,899],[1382,913],[1452,930],[1500,942],[1600,962],[1700,977],[1820,985],[2160,988],[2520,989]];
const redTh = [[1074,20],[1200,22],[1300,26],[1400,30],[1500,36],[1600,42],[1700,46],[1800,46],[2100,44],[2520,44]];

// solid core of the peak band
let coreTop = [], coreBot = [];
for (let x = 1180; x <= R; x += 10) {
  let t = interp(redTop, x), th = interp(redTh, x);
  coreTop.push(x + " " + (t + 6).toFixed(1));
  coreBot.unshift(x + " " + (t + th * (x < 1400 ? .6 : 1)).toFixed(1));
}
s += `<path d="M${coreTop.join("L")}L${coreBot.join("L")}z" fill="#b00000"/>`;

let red = "M" + redLow.map(zx).join("L");
let up = true;
for (let x = 1071; x < R; ) {
  let t = interp(redTop, x), th = interp(redTh, x), y;
  if (up) {
    y = t + rnd() * 8;
    if (rnd() < .03) y -= 5 + rnd() * 10;
  } else {
    y = t + th * (.5 + .5 * rnd());
  }
  red += "L" + x.toFixed(1) + " " + y.toFixed(1);
  up = !up;
  x += x < 1300 ? 1.3 : 1;
}
s += `<path d="${red}" fill="none" stroke="#b00000" stroke-width="2"/>`;

// harmonics and other lone spikes
const spikes = [[1097,810],[1183,816],[1251,816],[1306,855],[1352,851],[1393,889],[1488,918],[1601,948],[1636,957],[1856,983],[1935,984],[1945,970],[2098,969],[2137,965],[2143,960],[2150,975],[2155,975],[2165,965],[2240,967],[2247,957],[2252,969],[2513,942]];
spikes.forEach(p => {
  s += `<path d="M${p[0]} ${p[1]}V${interp(redTop, p[0]) + 8}" stroke="#b00000" stroke-width="2.2"/>`;
});

// skirt around the 7 kHz tone
const comb = [[2167,922,3],[2172,885,3],[2178,852,3],[2183,822,7],[2193,797,13],[2208,822,8],[2219,850,3],[2224,887,3],[2230,919,3]];
s += `<path d="M2163 1000L2172 960L2183 900L2193 850L2205 850L2216 900L2226 950L2236 1000z" fill="#b00000"/>`;
comb.forEach(c => { s += `<rect x="${c[0] - 1}" y="${c[1]}" width="${c[2]}" height="${995 - c[1]}" fill="#b00000"/>`; });
s += `<rect x="2197.5" y="325" width="3" height="480" fill="#b00000"/>`;

// hump at 13-15 kHz
const hump = [[2385,993],[2387,945],[2392,942],[2393,890],[2396,878],[2400,862],[2420,862],[2422,885],[2426,890],[2428,935],[2432,985],[2434,993]];
for (let x = 2385; x < 2434; x += 1.5) {
  let y = interp(hump, x) + rnd() * 8;
  s += `<rect x="${x}" y="${y.toFixed(1)}" width="2" height="${(1000 - y).toFixed(1)}" fill="#b00000"/>`;
}

// black trace
s += `<path d="M${blackLow.map(zx).join("L")}M${blackLow2.map(zx).join("L")}" fill="none" stroke="#000" stroke-width="1.8"/>`;
let blk = "M1032 860";
up = true;
for (let x = 1034; x < R; ) {
  let t = interp(redTop, x), th = interp(redTh, x), y;
  let top = x < 1100 ? t + 14 : t + th - 3;
  if (up) {
    y = top + rnd() * (x < 1700 ? 18 : 5);
  } else {
    let fr = Math.min(1, Math.max(0, (x - 1000) / 760));
    let d = B + 2 - top;
    y = top + Math.min(1, Math.pow(rnd(), 1.3 - 1.2 * fr) * (.6 + .85 * fr)) * d;
    if (x > 1780) y = B + 2;
  }
  blk += "L" + x.toFixed(1) + " " + y.toFixed(1);
  up = !up;
  x += x < 1200 ? 2 : x < 1500 ? 1.4 : .9;
}
s += `<path d="${blk}" fill="none" stroke="#000" stroke-width="2"/>`;
s += `<path d="M2158 1034L2170 1018L2178 1002L2184 985L2190 952L2195 922L2199 897L2203 922L2208 952L2213 985L2220 1005L2228 1024L2240 1036V1077H2158z" fill="#000"/>`;
s += `<path d="M2199.500 1013H2201V1053H2203V1077H2195L2197 1060H2199.500z" fill="#fff"/>`;
for (let i = 0; i < 6; i++) {
  let x = 1790 + rnd() * 100, y = 1034 + rnd() * 15;
  s += `<path d="M${x.toFixed(1)} ${y.toFixed(1)}v${(6 + rnd() * 12).toFixed(1)}" stroke="#fff"/>`;
}

// cursor line
s += `<path d="M${L} 993.500H${R}" stroke="#000"/>`;

// harmonic numbers
[["2",976,688],["3",1098,824],["4",1185,807],["5",1252,812],["6",1307,853],["7",1353,844],["8",1393,885],["9",1429,991]].forEach(h => {
  if (h[0] === "9") s += `<rect x="${h[1] - 5}" y="${h[2] - 13}" width="10" height="17" fill="#dfe0f0"/>`;
  s += `<text x="${h[1]}" y="${h[2]}" text-anchor="middle" style="fill:#1a1ae0;font-size:12.500px">${h[0]}</text>`;
});

// frame of the plot
s += `<path d="M${L} 106.500H${R + 2}" stroke="#b4b4b4" stroke-width="3"/>`;
s += `<path d="M${L} 1078H${R + 2}" stroke="#8a8a8a" stroke-width="2.500"/>`;
s += `<path d="M${L - .5} 106V1079" stroke="#777" stroke-width="1.500"/>`;
s += `<path d="M${R + 1} 106V1079" stroke="#9a9a9a" stroke-width="3"/>`;

// axis labels
s += `<text x="428" y="101" text-anchor="end">dBc</text>`;
for (let db = 20; db >= -150; db -= 10) {
  if (db === -140) continue;
  s += `<text x="430" y="${Math.round(Y(db)) + 5}" text-anchor="end">${db}</text>`;
}
const ticks = [[30],[40],[50],[60],[70],[80],[90],[100],[200],[300],[400],[500],[600],[700],[800],[900],[1000,"1k"],[2000,"2k"],[3000,"3k"],[4000,"4k"],[5000,"5k"],[6000,"6k"],[7000,"7k"],[8000,"8k"],[9000,"9k"],[10000,"10k"]];
ticks.forEach(t => { s += `<text x="${X(t[0]).toFixed(1)}" y="1095" text-anchor="middle">${t[1] || t[0]}</text>`; });
[[13000,"13k"],[15000,"15k"],[17000,"17k"]].forEach(t => {
  s += `<text x="${X(t[0]).toFixed(1)}" y="1095" text-anchor="middle" style="fill:#999">${t[1]}</text>`;
});
s += `<text x="2515" y="1095" text-anchor="middle">20kHz</text>`;

document.getElementById("plot").innerHTML = s;
</script>
<script src="https://cdn.jsdelivr.net/npm/bootstrap@5.3.0/dist/js/bootstrap.bundle.min.js"></script>
</body>
</html>
